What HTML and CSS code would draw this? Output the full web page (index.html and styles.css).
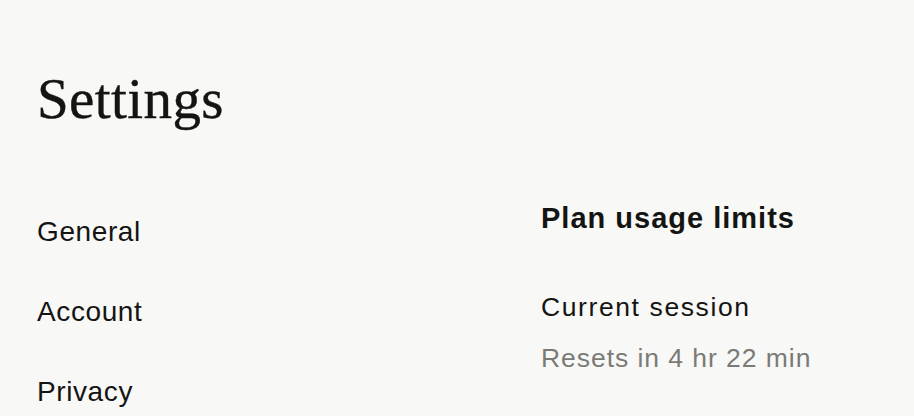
FILE: index.html
```html
<!DOCTYPE html>
<html lang="en">
<head>
    <meta charset="UTF-8">
    <meta name="viewport" content="width=device-width, initial-scale=1.0">
    <title>Settings</title>
    <link rel="stylesheet" href="styles.css">
</head>
<body>

    <div class="page">
        <h1 class="page-title">Settings</h1>

        <div class="layout">
            <!-- Sidebar nav -->
            <ul class="nav">
                <li>General</li>
                <li>Account</li>
                <li>Privacy</li>
            </ul>

            <!-- Usage panel -->
            <div class="content">
                <h2>Plan usage limits</h2>
                <div class="usage-row">
                    <div class="usage-name">Current session</div>
                    <div class="usage-reset">Resets in 4 hr 22 min</div>
                </div>
            </div>
        </div>
    </div>

</body>
</html>
```

FILE: styles.css
```css
/* General Styles */
* {
    margin: 0;
    padding: 0;
    box-sizing: border-box;
}

body {
    background-color: #f8f8f6;
    color: #141413;
    font-family: "Liberation Sans", Arial, sans-serif;
    overflow: hidden;
}

.page {
    padding: 70px 37px 0;
}

.page-title {
    font-family: "Liberation Serif", "Times New Roman", serif;
    font-weight: 400;
    font-size: 57px;
    line-height: 1;
    letter-spacing: 0.4px;
    -webkit-text-stroke: 0.4px #141413;
}

/* Two columns */
.layout {
    display: grid;
    grid-template-columns: 504px 1fr;
    margin-top: 65px;
}

.nav {
    list-style: none;
}

.nav li {
    font-size: 28px;
    line-height: 80px;
    letter-spacing: 0.6px;
    cursor: pointer;
}

.content {
    padding-top: 6px;
}

.content h2 {
    font-size: 29px;
    font-weight: 700;
    line-height: 40px;
    letter-spacing: 1px;
}

.usage-row {
    margin-top: 51px;
}

.usage-name {
    font-size: 26.5px;
    line-height: 36px;
    letter-spacing: 1.6px;
}

.usage-reset {
    margin-top: 15px;
    font-size: 26.5px;
    line-height: 36px;
    letter-spacing: 0.95px;
    color: #7b7b76;
}
```
